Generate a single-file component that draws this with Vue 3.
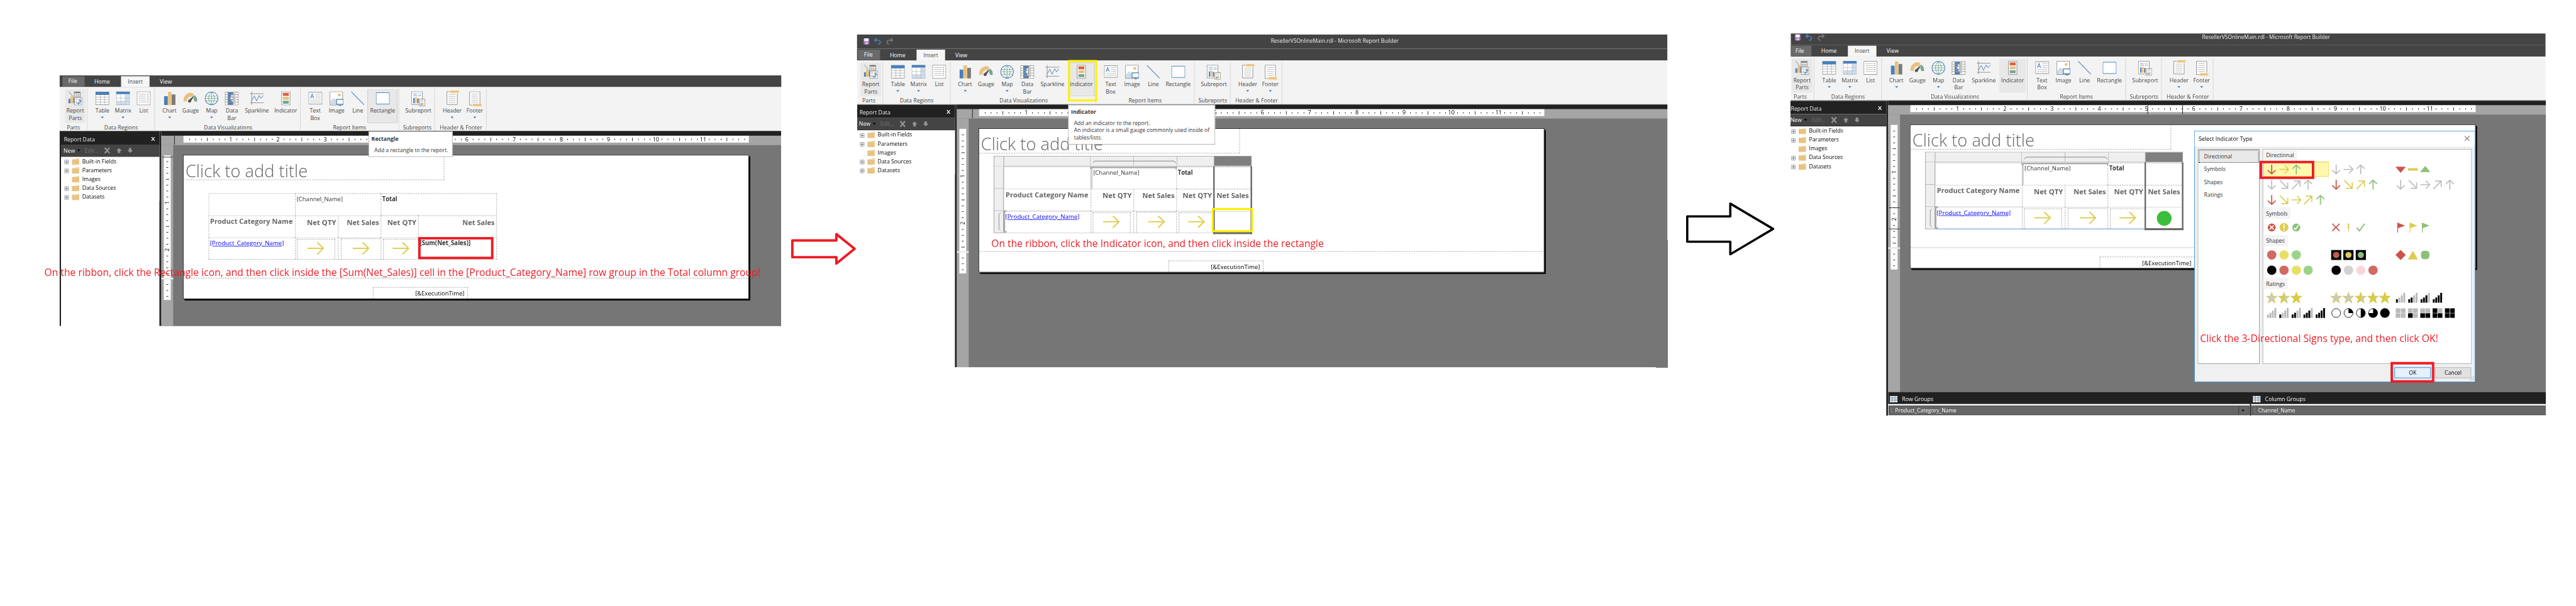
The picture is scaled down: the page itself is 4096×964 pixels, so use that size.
<script setup>
const groups = [
  { name: 'Parts', w: 51.2, pad: 5, shift: -2, items: [{ icon: 'parts', lines: ['Report', 'Parts'], w: 42 }] },
  {
    name: 'Data Regions', w: 137.1, pad: 9, shift: 1,
    items: [
      { icon: 'table', lines: ['Table'], w: 42, more: true },
      { icon: 'matrix', lines: ['Matrix'], w: 42, more: true },
      { icon: 'list', lines: ['List'], w: 42 },
    ],
  },
  {
    name: 'Data Visualizations', w: 295.9, pad: 8, shift: 2,
    items: [
      { icon: 'chart', lines: ['Chart'], w: 42.5, more: true },
      { icon: 'gauge', lines: ['Gauge'], w: 43 },
      { icon: 'map', lines: ['Map'], w: 43, more: true },
      { icon: 'databar', lines: ['Data', 'Bar'], w: 39 },
      { icon: 'spark', lines: ['Sparkline'], w: 63 },
      { icon: 'indicator', lines: ['Indicator'], w: 54 },
    ],
  },
  {
    name: 'Report Items', w: 199.7, pad: 9, shift: 1,
    items: [
      { icon: 'textbox', lines: ['Text', 'Box'], w: 41 },
      { icon: 'image', lines: ['Image'], w: 46 },
      { icon: 'line', lines: ['Line'], w: 40 },
      { icon: 'rect', lines: ['Rectangle'], w: 61 },
    ],
  },
  { name: 'Subreports', w: 73.3, pad: 6, shift: 2, items: [{ icon: 'subreport', lines: ['Subreport'], w: 67 }] },
  {
    name: 'Header & Footer', w: 104.8, pad: 12, shift: 2,
    items: [
      { icon: 'header', lines: ['Header'], w: 46, more: true },
      { icon: 'footer', lines: ['Footer'], w: 46, more: true },
    ],
  },
]

const tree = [
  { name: 'Built-in Fields', open: true },
  { name: 'Parameters', open: true },
  { name: 'Images', open: false },
  { name: 'Data Sources', open: true },
  { name: 'Datasets', open: true },
]

const shots = [
  { id: 1, active: 'rect' },
  { id: 2, active: 'indicator' },
  { id: 3, active: '' },
]

const hTicks = Array.from({ length: 95 }, (_, i) => i + 1)
const vTicks = Array.from({ length: 20 }, (_, i) => i + 1)

const gallery = [
  {
    name: 'Directional',
    rows: [
      ['down-r right-y up-g', 'down-s right-s up-s', 'tridown-r dash-y triup-g'],
      ['down-s dr-s ur-s up-s', 'down-r dr-y ur-y up-g', 'down-s dr-s right-s ur-s up-s'],
      ['down-r dr-y right-y ur-y up-g'],
    ],
  },
  { name: 'Symbols', rows: [['cx-r cbang-y ccheck-g', 'x-r bang-y check-g', 'flag-r flag-y flag-g']] },
  {
    name: 'Shapes',
    rows: [
      ['dot-lr dot-ly dot-lg', 'lamp-r lamp-y lamp-g', 'diamond-r tri-y oct-g'],
      ['dot-k dot-lr dot-ly dot-lg', 'dot-k dot-ls dot-p dot-lr'],
    ],
  },
  {
    name: 'Ratings',
    rows: [
      ['star-0 star-2 star-4', 'star-0 star-1 star-2 star-3 star-4', 'bars-1 bars-2 bars-3 bars-4'],
      ['bars-0 bars-1 bars-2 bars-3 bars-4', 'pie-0 pie-1 pie-2 pie-3 pie-4', 'box-0 box-1 box-2 box-3 box-4'],
    ],
  },
].map((s) => ({
  ...s,
  rows: s.rows.map((r) => r.map((c) => c.split(' ').map((i) => {
    const [shape, arg] = i.split('-')
    return { shape, arg }
  }))),
}))

const pies = ['', 'M10.5 10.5V1A9.5 9.5 0 0 1 20 10.5Z', 'M10.5 1A9.5 9.5 0 0 1 10.5 20Z', 'M10.5 10.5V1A9.5 9.5 0 1 1 1 10.5Z', 'M10.5 1a9.5 9.5 0 1 1 0 19a9.5 9.5 0 1 1 0-19Z']
const barTops = [14, 10.5, 6, 1]
const boxes = [[0.5, 11], [11, 11], [0.5, 1], [11, 1]]
const sets = ['bars', 'pie', 'box', 'star']
const star = 'm10.5 0 2.8 7.5H21l-6.2 5 2.400 8.200-6.700-5-6.700 5 2.400-8.200L0 7.500h7.700z'

// Squeezes or stretches a line of text to the given width.
const vFit = {
  mounted(el, { value }) {
    el.style.transform = `scaleX(${value / el.offsetWidth})`
  },
}
</script>

<template>
  <div class="viewport">
    <svg class="defs" aria-hidden="true">
      <symbol id="i-parts" viewBox="0 0 28 28">
        <path d="M1 0 11 13" stroke="#7a7a7a" fill="none" />
        <path d="M12 .5h12v12H12z" fill="#fff" stroke="#7a7a7a" /><path d="M12 .5h12v3H12z" fill="#7a7a7a" />
        <path d="M16 3v9M20 3v9M12 7h12M12 10h12" stroke="#999" fill="none" />
        <path d="M0 15h4v9H0z" fill="#4a7fb9" /><path d="M4.500 10h5v14h-5z" fill="#e8c17e" /><path d="M10 13h2v11h-2z" fill="#7a7a7a" />
        <path d="M12.500 12.500h15v15h-15z" fill="#fff" stroke="#7a7a7a" />
        <path d="M15 15h3v3h-3zM20 15h6v3h-6zM15 20h3v5h-3z" fill="#bbb" />
        <path d="M19 24h5v-6M21.500 21.500 19 24l2.500 2.500M21.500 20.500 24 18l2.500 2.500" stroke="#4a7fb9" fill="none" stroke-width="1.300" />
      </symbol>
      <symbol id="i-table" viewBox="0 0 28 28">
        <path d="M.5 1h27v26H.5z" fill="#fff" /><path d="M10 6v21M18.500 6v21M1 11.500h26M1 16.500h26M1 21.500h26" stroke="#aaa" fill="none" />
        <path d="M.5 1h27v26H.5z" fill="none" stroke="#7a7a7a" /><path d="M0 .5h28V7H0z" fill="#4a7fb9" />
      </symbol>
      <symbol id="i-matrix" viewBox="0 0 28 28">
        <path d="M.5 1h27v26H.5z" fill="#fff" /><path d="M18.500 6H27v21H18.500zM1 20h26v7H1z" fill="#d0dfee" />
        <path d="M9.500 6v21M18.500 6v21M1 13.500h26M1 20h26" stroke="#b5bcc4" fill="none" />
        <path d="M.5 1h27v26H.5z" fill="none" stroke="#9aa6b2" /><path d="M0 0h28v5.500H0z" fill="#4a7fb9" />
      </symbol>
      <symbol id="i-list" viewBox="0 0 28 28">
        <path d="M.5.5h27v27H.5z" fill="#fff" stroke="#7a7a7a" />
        <path d="M4 5.500h15M4 9.500h15M4 13.500h15M4 17.500h15M4 21.500h15" stroke="#aaa" />
        <path d="M21 5.500h3M21 9.500h3M21 13.500h3M21 17.500h3M21 21.500h3" stroke="#666" />
      </symbol>
      <symbol id="i-chart" viewBox="0 0 28 28">
        <path d="M2.500 9.500h7.500V27.500H2.500z" fill="#4a7fb9" /><path d="M10.500 1h7v26.500h-7z" fill="#e8c17e" /><path d="M18 6h7.500v21.500H18z" fill="#7a7a7a" />
      </symbol>
      <symbol id="i-gauge" viewBox="0 0 28 28">
        <path d="M0 20A14 16 0 0 1 21 5L18 11A8 9 0 0 0 7 20Z" fill="#e8c17e" />
        <path d="M23 8a14 14 0 0 1 5 12.500h-6a8 8 0 0 0-2-6z" fill="#76a592" />
        <path d="M23 7 15.500 19.500a3.200 3.200 0 1 1-4-3z" fill="#555" />
      </symbol>
      <symbol id="i-map" viewBox="0 0 28 28">
        <circle cx="14" cy="14" r="13" fill="#fff" /><path d="M1.500 9.500h25M1 14h26M2 19h24M14 1v26M14 1c-8 7-8 19 0 26M14 1c8 7 8 19 0 26" stroke="#76a592" fill="none" stroke-width="1.200" />
        <circle cx="14" cy="14" r="13" fill="none" stroke="#4a7fb9" stroke-width="1.300" />
      </symbol>
      <symbol id="i-databar" viewBox="0 0 28 28">
        <path d="M.5 1.500h27v26H.5z" fill="#fff" /><path d="M6.500 2H16v4H6.500zM6.500 7H13v4H6.500zM6.500 12h5v4h-5zM6.500 17H14v4H6.500zM6.500 22H16v5H6.500z" fill="#4a7fb9" />
        <path d="M.5 6.500h27M.5 11.500h27M.5 16.500h27M.5 21.500h27M6.500 1v26M16.500 1v26" stroke="#777" fill="none" />
        <path d="M18 4h3M18 9h3M18 14h3M18 19h3M18 24h3" stroke="#555" /><path d="M.5 1.500h27v26H.5z" fill="none" stroke="#7a7a7a" />
      </symbol>
      <symbol id="i-spark" viewBox="0 0 28 28">
        <path d="M3.500 0v27M0 4.500h28M0 23h28" stroke="#7a7a7a" fill="none" /><path d="M3 19 9 9l4.500 10L19 8l3.500 6 5-6" stroke="#4a7fb9" fill="none" stroke-width="1.200" />
      </symbol>
      <symbol id="i-indicator" viewBox="0 0 28 28">
        <path d="M5.500.5h17v27h-17z" fill="#fff" stroke="#7a7a7a" /><path d="M8 3h12v6H8z" fill="#dc6141" /><path d="M8 11h12v6H8z" fill="#e8c17e" /><path d="M8 19h12v6H8z" fill="#76a592" />
      </symbol>
      <symbol id="i-textbox" viewBox="0 0 28 28">
        <path d="M.5 1.500h27v24H.5z" fill="#fff" stroke="#7a7a7a" /><path d="M4 14 7.500 5 11 14M5.200 11h4.600" fill="none" stroke="#4a7fb9" stroke-width="1.300" />
        <path d="M14 5.500h11M14 9.500h11M14 13.500h11M3.500 17.500H25M3.500 21.500H25" stroke="#aaa" />
      </symbol>
      <symbol id="i-image" viewBox="0 0 28 30">
        <path d="M.5.5h26v27H.5z" fill="#fff" stroke="#7a7a7a" /><path d="M1.500 26.500V19L9 13l13 13.500z" fill="#cfdcea" /><circle cx="19.500" cy="7" r="3" fill="#e8c17e" />
        <path d="M14 16h14v10H14z" fill="#fff" stroke="#4a7fb9" stroke-width="1.600" /><path d="M18.500 29.500h6L21.500 27z" fill="#4a7fb9" />
      </symbol>
      <symbol id="i-line" viewBox="0 0 28 28"><path d="M1 .5 27 27" stroke="#4a7fb9" stroke-width="1.300" /></symbol>
      <symbol id="i-rect" viewBox="0 0 28 28"><path d="M.5 2.500h27v23H.5z" fill="#fff" stroke="#4a7fb9" stroke-width="1.200" /></symbol>
      <symbol id="i-subreport" viewBox="0 0 28 30">
        <path d="M.5.5h22v26H.5z" fill="#fff" stroke="#7a7a7a" /><path d="M4 5h7M14 8.500h6M4 8.500h8" stroke="#4a7fb9" /><path d="M13 5h7" stroke="#aaa" />
        <path d="M4 13h3v11H4z" fill="#4a7fb9" /><path d="M8 11.500h3V24H8z" fill="#e8c17e" /><path d="M12 14h3v10h-3z" fill="#7a7a7a" />
        <path d="M16.500 15.500h11v14h-11z" fill="#fff" stroke="#7a7a7a" /><path d="M19 18h6M19 20.500h5" stroke="#aaa" /><path d="M19 23.500h2V28h-2z" fill="#4a7fb9" /><path d="M22.500 22.500h2V28h-2z" fill="#e09a4a" />
      </symbol>
      <symbol id="i-header" viewBox="0 0 28 30">
        <path d="M3.500 2.500h21v26h-21z" fill="#fff" stroke="#7a7a7a" /><path d="M7 8.500h14M7 12.500h14M7 16.500h14M7 20.500h14M7 24.500h14" stroke="#aaa" /><path d="M9 0h19v6.500H9z" fill="#f3f3f3" /><path d="M10 0h18v5H10z" fill="#edc67f" />
      </symbol>
      <symbol id="i-footer" viewBox="0 0 28 30">
        <path d="M3.500.5h21v27h-21z" fill="#fff" stroke="#7a7a7a" /><path d="M7 5.500h14M7 9.500h14M7 13.500h14M7 17.500h14M7 21.500h14" stroke="#aaa" /><path d="M9 23.500h19V30H9z" fill="#f3f3f3" /><path d="M10 25h18v5H10z" fill="#edc67f" />
      </symbol>
      <symbol id="i-grid" viewBox="0 0 16 13"><path d="M0 0h16v13H0z" fill="#e8edf2" /><path d="M5.500 0h5v13h-5z" fill="#fff" /><path d="M0 3.500h16M0 6.500h16M0 9.500h16M5.500 0v13M10.500 0v13" stroke="#6d8299" fill="none" /></symbol>

      <symbol id="g-down" viewBox="0 0 21 21"><path d="M10.500.5V19.500M2.500 12 10.500 19.500 18.500 12" fill="none" stroke="currentColor" stroke-width="2.200" /></symbol>
      <symbol id="g-up" viewBox="0 0 21 21"><path d="M10.500 20.500V1.500M2.500 9 10.500 1.500 18.500 9" fill="none" stroke="currentColor" stroke-width="2.200" /></symbol>
      <symbol id="g-right" viewBox="0 0 21 21"><path d="M.5 10.500H19.500M12 2.500 19.500 10.500 12 18.500" fill="none" stroke="currentColor" stroke-width="2.200" /></symbol>
      <symbol id="g-dr" viewBox="0 0 21 21"><path d="M2 1.500 18 18M5.500 18H18V6" fill="none" stroke="currentColor" stroke-width="2.200" /></symbol>
      <symbol id="g-ur" viewBox="0 0 21 21"><path d="M2 19.500 18 3M5.500 3H18v12" fill="none" stroke="currentColor" stroke-width="2.200" /></symbol>
      <symbol id="g-tridown" viewBox="0 0 21 21"><path d="M0 5h21L10.500 17.500z" fill="currentColor" /></symbol>
      <symbol id="g-dash" viewBox="0 0 21 21"><path d="M.5 8h20v5H.5z" fill="currentColor" /></symbol>
      <symbol id="g-triup" viewBox="0 0 21 21"><path d="M0 16h21L10.500 3.500z" fill="currentColor" /></symbol>
      <symbol id="g-cx" viewBox="0 0 21 21"><circle cx="10.500" cy="10.500" r="8" fill="currentColor" /><path d="m6.500 6.500 8 8m0-8-8 8" stroke="#fff" stroke-width="2.200" /></symbol>
      <symbol id="g-cbang" viewBox="0 0 21 21"><circle cx="10.500" cy="10.500" r="9" fill="currentColor" /><path d="M10.500 3.500v9.500M10.500 15v2.500" stroke="#fff" stroke-width="2.200" /></symbol>
      <symbol id="g-ccheck" viewBox="0 0 21 21"><circle cx="10.500" cy="10.500" r="8" fill="currentColor" /><path d="m6 11 3 3.500 6-9" fill="none" stroke="#fff" stroke-width="2.200" /></symbol>
      <symbol id="g-x" viewBox="0 0 21 21"><path d="m2.500 3 15 15m0-15-15 15" stroke="currentColor" stroke-width="2.200" /></symbol>
      <symbol id="g-bang" viewBox="0 0 21 21"><path d="M10.500 2.500v11M10.500 15.500v2.500" stroke="currentColor" stroke-width="3" /></symbol>
      <symbol id="g-check" viewBox="0 0 21 21"><path d="m2 10.500 5.500 7L18.500 3" fill="none" stroke="currentColor" stroke-width="2.400" /></symbol>
      <symbol id="g-flag" viewBox="0 0 21 21"><path d="M4.500 1v20" stroke="currentColor" stroke-width="1.500" /><path d="M4.500 1 19.500 7 4.500 12.500z" fill="currentColor" /></symbol>
      <symbol id="g-dot" viewBox="0 0 21 21"><circle cx="10.500" cy="10.500" r="9.500" fill="currentColor" /></symbol>
      <symbol id="g-lamp" viewBox="0 0 21 21"><path d="M0 0h21v21H0z" fill="#000" /><circle cx="10.500" cy="10.500" r="6" fill="currentColor" stroke="#bbb" stroke-width=".6" /></symbol>
      <symbol id="g-diamond" viewBox="0 0 21 21"><path d="M10.500 0 21 10.500 10.500 21 0 10.500z" fill="currentColor" /></symbol>
      <symbol id="g-tri" viewBox="0 0 21 21"><path d="M10.500 2 21 19.500H0z" fill="currentColor" /></symbol>
      <symbol id="g-oct" viewBox="0 0 21 21"><rect x="2" y="2" width="17" height="17" rx="6" fill="currentColor" /></symbol>
    </svg>

    <main class="board">
      <section v-for="s in shots" :key="s.id" class="shot" :class="'shot-' + s.id">
        <div class="frame">
          <header class="titlebar">
            <template v-if="s.id > 1">
              <svg class="quick" viewBox="0 0 62 14">
                <path d="M0 1h12v12H0z" fill="#9a6fc0" /><path d="M2 1h8v6H2zM3.500 9.500h5V13h-5z" fill="#fff" /><path d="M4 10.500h2V13H4z" fill="#9a6fc0" />
                <path d="M23 4.500h5c8 0 8 8 1 8.500M27 .5l-4.500 4L27 8" fill="none" stroke="#4a7fb9" stroke-width="2.200" />
                <path d="M59 4.500h-5c-8 0-8 8-1 8.500M55 .5l4.500 4L55 8" fill="none" stroke="#7d7d7d" stroke-width="1.800" />
              </svg>
              <span class="doc"><span v-fit="260" class="fit">ResellerVSOnlineMain.rdl - Microsoft Report Builder</span></span>
            </template>
          </header>
          <nav class="tabs">
            <span class="tab file">File</span><span class="tab home">Home</span><span class="tab current">Insert</span><span class="tab view">View</span>
          </nav>

          <div class="ribbon">
            <div v-for="g in groups" :key="g.name" class="group" :style="{ width: g.w + 'px' }">
              <div class="tools" :style="{ paddingLeft: g.pad + 'px' }">
                <div
                  v-for="t in g.items" :key="t.icon" class="tool"
                  :class="{ soft: t.icon === 'parts' || (s.id === 3 && t.icon === 'indicator'), active: t.icon === s.active }"
                  :style="{ width: t.w + 'px' }"
                >
                  <svg class="ticon" :class="'ic-' + t.icon"><use :href="'#i-' + t.icon" /></svg>
                  <span v-for="l in t.lines" :key="l" class="tl">{{ l }}</span>
                  <i v-if="t.more" class="more"></i>
                </div>
              </div>
              <div class="gname"><span :style="{ marginLeft: g.shift * 2 - 2 + 'px' }">{{ g.name }}</span></div>
            </div>
          </div>

          <div class="main">
            <aside class="side">
              <div class="shead"><span>Report Data</span><b>X</b></div>
              <div class="sbar">
                <span>New</span><i class="caret"></i><span class="dim">Edit...</span>
                <svg class="sicons" viewBox="0 0 58 14">
                  <path d="m1 1.500 9.500 11M10.500 1.500 1 12.500" stroke="#949494" stroke-width="2.800" />
                  <path d="M30 2l5.500 5.500h-3V12h-5V7.500h-3zM53 12l5-5.500h-3V2h-5v4.500h-3z" fill="#949494" />
                </svg>
              </div>
              <ul class="tree">
                <li v-for="n in tree" :key="n.name">
                  <i class="plus" :class="{ none: !n.open }"></i>
                  <svg class="folder" viewBox="0 0 15 13"><path d="M0 2h8l1.500-2H15v13H0z" fill="#e9c382" /><path d="M9.500 1h4v1h-4.500z" fill="#fff" /></svg>
                  <span>{{ n.name }}</span>
                </li>
              </ul>
            </aside>

            <div class="work">
              <div class="hruler">
                <div class="hscale">
                  <span v-for="i in hTicks" :key="i" class="ht"><b v-if="i % 8 === 0">{{ i / 8 }}</b><i v-else :class="{ half: i % 4 === 0 }"></i></span>
                </div>
                <template v-if="s.id === 3"><i class="mark m3a"></i><i class="mark m3b"></i></template>
                <i v-else class="mark" :class="'m' + s.id"></i>
              </div>
              <div class="desk">
                <div class="vruler">
                  <div class="vscale a">
                    <span v-for="i in vTicks" :key="i" class="vt"><b v-if="i % 8 === 0">{{ i / 8 }}</b><i v-else :class="{ half: i % 4 === 0 }"></i></span>
                  </div>
                  <div class="vgap"></div>
                  <div class="vscale b"><span v-for="i in 3" :key="i" class="vt"><i></i></span></div>
                  <i v-if="s.id === 1" class="vmark v1"></i>
                  <template v-if="s.id === 3"><i class="vmark v3a"></i><i class="vmark v3b"></i></template>
                </div>

                <div class="canvas">
                  <div class="page">
                    <div class="ptitle"><span v-fit="248" class="fit">Click to add title</span></div>
                    <template v-if="s.id > 1">
                      <div class="colheads"><i></i><i></i><i></i><i></i><i></i><i class="sel"></i>
                        <svg class="cbr" viewBox="0 0 170 6"><path d="M.5 6 4 1.500h162L169.500 6" fill="none" stroke="#666" /></svg>
                      </div>
                      <div class="rowheads"><i></i><i></i><i></i>
                        <svg class="rbr" viewBox="0 0 5 38"><path d="M5 .5 1.500 4v30L5 37.500" fill="none" stroke="#777" /></svg>
                      </div>
                    </template>
                    <div class="matrix" :class="{ wide: s.id === 1, editing: s.id > 1 }">
                      <div class="c solid"></div>
                      <div class="c span chan"><span v-fit="94" class="fit">[Channel_Name]</span></div>
                      <div class="c span tot"><span v-fit="31" class="fit">Total</span></div>
                      <div class="c h sl first"><span v-fit="168" class="fit">Product Category Name</span></div>
                      <div class="c h sl r"><span v-fit="59" class="fit">Net QTY</span></div>
                      <div class="c h sl r"><span v-fit="65" class="fit">Net Sales</span></div>
                      <div class="c h r"><span v-fit="59" class="fit">Net QTY</span></div>
                      <div class="c h r"><span v-fit="65" class="fit">Net Sales</span></div>
                      <div class="c sl link"><span v-fit="151" class="fit">[Product_Category_Name]</span></div>
                      <div v-for="k in 3" :key="k" class="c sl ar">
                        <div class="box" :class="'b' + k"><svg class="yarrow" viewBox="0 0 34 26"><path d="M0 13H32M20 1 32.500 13 20 25" fill="none" stroke="#dfcf55" stroke-width="2.600" /></svg></div>
                      </div>
                      <div class="c sl">
                        <span v-if="s.id === 1" v-fit="103" class="fit sum">[Sum(Net_Sales)]</span>
                        <i v-if="s.id === 3" class="green"></i>
                      </div>
                    </div>
                    <template v-if="s.id > 1">
                      <i class="gbar top"></i><i class="gbar left"></i><i class="colsel"></i>
                    </template>
                    <i v-if="s.id === 1" class="hl red sumbox"></i>
                    <i v-if="s.id === 2" class="hl yellow cellbox"></i>
                    <div class="pfoot"></div>
                    <div class="exec"><span v-fit="100" class="fit">[&amp;ExecutionTime]</span></div>
                  </div>
                </div>
              </div>

              <div v-if="s.id === 3" class="dock">
                <div class="dhead">
                  <div class="dh rowg"><svg><use href="#i-grid" /></svg><span>Row Groups</span></div>
                  <div class="dh"><svg><use href="#i-grid" /></svg><span>Column Groups</span></div>
                </div>
                <div class="dbody">
                  <div class="dcell dr"><em></em><span v-fit="125" class="fit">Product_Category_Name</span><b><i class="caret"></i></b></div>
                  <div class="dcell"><em></em><span v-fit="75" class="fit">Channel_Name</span></div>
                </div>
              </div>
            </div>
          </div>

          <div v-if="s.id === 1" class="tip tip1"><b>Rectangle</b><p><span v-fit="150" class="fit">Add a rectangle to the report.</span></p></div>
          <template v-if="s.id === 2">
            <div class="tip tip2"><b>Indicator</b>
              <p><span v-fit="154" class="fit">Add an indicator to the report.</span></p>
              <p><span v-fit="275" class="fit">An indicator is a small gauge commonly used inside of</span></p>
              <p><span v-fit="57" class="fit">tables/lists.</span></p>
            </div>
            <i class="hl yellow toolbox"></i>
          </template>

          <div v-if="s.id === 3" class="dialog">
            <div class="dtitle"><span v-fit="109" class="fit">Select Indicator Type</span><svg viewBox="0 0 11 11"><path d="m.5.5 10 10m0-10-10 10" stroke="#000" /></svg></div>
            <div class="dmain">
              <ul class="cats"><li v-for="(g, i) in gallery" :key="g.name" :class="{ chosen: i === 0 }">{{ g.name }}</li></ul>
              <div class="gal">
                <template v-for="(g, gi) in gallery" :key="g.name">
                  <div class="ghead"><span>{{ g.name }}</span></div>
                  <div class="grows">
                    <div v-for="(r, ri) in g.rows" :key="ri" class="grow">
                      <div v-for="(c, ci) in r" :key="ci" class="gcell" :class="{ picked: !gi && !ri && !ci }">
                        <svg v-for="(x, xi) in c" :key="xi" viewBox="0 0 21 21" class="ind" :class="sets.includes(x.shape) ? '' : 'k-' + x.arg">
                          <template v-if="x.shape === 'bars'">
                            <rect v-for="(t, bi) in barTops" :key="bi" :x="1 + bi * 5" :y="t - 0.5" width="3.800" :height="21 - t" :fill="bi < +x.arg ? '#000' : '#bababa'" />
                          </template>
                          <template v-else-if="x.shape === 'pie'">
                            <circle cx="10.500" cy="10.500" r="9" fill="#fff" stroke="#000" stroke-width="1.100" /><path :d="pies[+x.arg]" fill="#000" />
                          </template>
                          <template v-else-if="x.shape === 'box'">
                            <rect v-for="(b, bi) in boxes" :key="bi" :x="b[0]" :y="b[1]" width="9.500" height="9.300" :fill="bi < +x.arg ? '#000' : '#bababa'" />
                          </template>
                          <template v-else-if="x.shape === 'star'">
                            <path :d="star" fill="#c9c9c4" stroke="#d5c95e" stroke-width="1.300" />
                            <svg v-if="+x.arg" x="-1" y="-1" :width="1 + x.arg * 5.500" height="23" class="clip"><path :d="star" transform="translate(1 1)" fill="#dacb42" stroke="#dacb42" stroke-width="1" /></svg>
                          </template>
                          <use v-else :href="'#g-' + x.shape" />
                        </svg>
                      </div>
                    </div>
                  </div>
                </template>
              </div>
            </div>
            <div class="dbtns"><button class="ok">OK</button><button>Cancel</button></div>
            <svg class="grip" viewBox="0 0 9 9"><path d="M6 0h2v2H6zM6 3h2v2H6zM3 3h2v2H3zM6 6h2v2H6zM3 6h2v2H3zM0 6h2v2H0z" fill="#bbb" /></svg>
            <i class="hl red pickbox"></i><i class="hl red okbox"></i>
          </div>
        </div>
      </section>

      <svg class="step s1" viewBox="0 0 134 68"><path d="M2.500 17H92V4L129 34 92 64V51H2.500Z" fill="#fff" stroke="#ed1c24" stroke-width="5" stroke-linejoin="round" /></svg>
      <svg class="step s2" viewBox="0 0 184 112"><path d="M4.500 31H92V5L179 56.500 92 108V82.500H4.500Z" fill="#fff" stroke="#000" stroke-width="4.600" stroke-linejoin="round" /></svg>

      <p class="cap c1"><span v-fit="1455" class="fit">On the ribbon, click the Rectangle icon, and then click inside the [Sum(Net_Sales)] cell in the [Product_Category_Name] row group in the Total column group!</span></p>
      <p class="cap c2"><span v-fit="676" class="fit">On the ribbon, click the Indicator icon, and then click inside the rectangle</span></p>
      <p class="cap c3"><span v-fit="484" class="fit">Click the 3-Directional Signs type, and then click OK!</span></p>
    </main>
  </div>
</template>

<style>
html, body { margin: 0; background: #fff; }
</style>

<style scoped>
.viewport { width: 4096px; height: 964px; overflow: hidden; background: #fff; }
.defs { position: absolute; width: 0; height: 0; }
.board { position: relative; width: 5236px; height: 1232px; transform: scale(0.78228); transform-origin: 0 0; font: 11.2px/16px "Open Sans", "Noto Sans", sans-serif; color: #444; }
.board * { box-sizing: border-box; }
.fit { display: inline-block; white-space: nowrap; transform-origin: 0 50%; }
ul, p { margin: 0; padding: 0; list-style: none; }

.shot { position: absolute; overflow: hidden; }
.shot-1 { left: 121px; top: 153px; width: 1467px; height: 510px; }
.shot-2 { left: 1742px; top: 70px; width: 1647px; height: 677px; }
.shot-3 { left: 3640px; top: 68px; width: 1534px; height: 777px; }
.frame { position: relative; display: flex; flex-direction: column; width: 1700px; }
.shot-1 .frame { margin-top: -29px; height: 539px; }
.shot-2 .frame { margin-left: -4px; height: 677px; }
.shot-3 .frame { margin: -6px 0 0 -9px; height: 783px; }

.titlebar { display: flex; height: 29px; flex: none; background: #444; padding-left: 17px; color: #f1f1f1; line-height: 26px; }
.quick { width: 62px; height: 14px; margin-top: 7px; flex: none; }
.doc { margin-left: 766px; }
.tabs { display: flex; flex: none; height: 24px; background: #444; padding: 2px 0 0 6px; color: #fff; line-height: 22px; }
.tab { text-align: center; }
.file { width: 45px; height: 21px; background: #6a6a6a; line-height: 20px; padding-right: 3px; }
.home { width: 71px; margin-right: 3px; }
.current { width: 58px; background: #f6f6f6; color: #444; }
.view { width: 66px; }

.ribbon { display: flex; flex: none; height: 90px; background: #f3f3f3; padding-left: 6px; border-bottom: 1px solid #444; }
.group { height: 87px; margin-top: 2px; border-right: 1px solid #d0d0d0; flex: none; }
.tools { display: flex; height: 72px; padding-top: 2px; }
.tool { display: flex; flex-direction: column; align-items: center; flex: none; height: 69px; padding-top: 5px; }
.ticon { width: 28px; height: 28px; flex: none; margin-bottom: 3px; }
.ic-header { height: 30px; margin-top: -2px; }
.ic-footer, .ic-image, .ic-subreport { height: 30px; margin-bottom: 1px; }
.tl { line-height: 15px; white-space: nowrap; }
.soft { background: #e8e8e8; }
.active { background: #e8e8e8; box-shadow: inset 0 0 0 1px #c6c6c6; }
.more { width: 0; height: 0; margin-top: 5px; border: 3px solid transparent; border-top: 4px solid #4a7fb9; border-bottom: 0; }
.gname { text-align: center; line-height: 15px; white-space: nowrap; }

.main { display: flex; flex: 1; min-height: 0; }
.side { width: 207px; flex: none; border: solid #212121; border-width: 0 4px 0 3px; background: #fff; color: #000; }
.shead { display: flex; justify-content: space-between; height: 27px; padding: 0 9px 0 6px; background: #212121; color: #f1f1f1; line-height: 32px; }
.shead b { font-size: 12px; line-height: 30px; }
.sbar { display: flex; align-items: center; height: 25px; padding-left: 5px; background: #444; color: #fff; border-bottom: 1px solid #222; }
.sbar .dim { color: #757575; margin-left: 9px; width: 40px; }
.caret { display: inline-block; width: 0; height: 0; margin-left: 5px; border: 3px solid transparent; border-top: 4px solid #000; border-bottom: 0; }
.sicons { width: 58px; height: 14px; }
.tree { background: #fff; }
.tree li { display: flex; align-items: center; height: 18px; padding-left: 7px; }
.plus { width: 9px; height: 9px; margin: 2px 6px 0 0; border: 1px solid #8c8c8c; border-radius: 1px; background: linear-gradient(#35507f, #35507f) 50% 50% / 5px 1px no-repeat, linear-gradient(#35507f, #35507f) 50% 50% / 1px 5px no-repeat, #f4f4f4; }
.plus.none { visibility: hidden; }
.folder { width: 15px; height: 13px; margin-right: 6px; }

.work { position: relative; display: flex; flex-direction: column; flex: 1; min-width: 0; background: #767676; border-top: 9px solid #212121; }
.hruler { position: relative; flex: none; height: 19px; padding-left: 45px; background: #a5a5a5; color: #000; }
.hscale { display: flex; width: 1149px; height: 14px; padding-left: 6px; background: #fff; overflow: hidden; }
.ht { display: flex; width: 12px; flex: none; align-items: center; justify-content: center; }
.ht i { width: 1px; height: 3px; background: #000; }
.ht i.half { height: 7px; }
.ht b { font-weight: 400; font-size: 11.5px; line-height: 14px; }
.mark { position: absolute; top: 0; width: 1px; height: 18px; background: #000; }
.m1 { left: 25.5px; } .m2 { left: 31px; } .m3a { left: 527px; } .m3b { left: 597.5px; }
.desk { display: flex; flex: 1; min-height: 0; }
.vruler { position: relative; width: 24px; flex: none; padding-top: 21px; background: #a5a5a5; color: #000; }
.vscale { width: 14px; margin-left: 5px; background: #fff; }
.vscale.a { height: 249px; padding-top: 6px; }
.vscale.b { height: 42px; padding-top: 4.500px; }
.vt { display: flex; height: 12px; align-items: center; justify-content: center; }
.vt i { width: 4px; height: 1px; background: #000; }
.vt i.half { width: 7px; }
.vt b { font-weight: 400; font-size: 11px; line-height: 12px; transform: rotate(-90deg); }
.vgap { height: 2.500px; background: #f0f0f0; }
.vmark { position: absolute; left: 2px; width: 21px; height: 1px; background: #000; }
.v1 { top: 24px; } .v3a { top: 189px; } .v3b { top: 232px; }
.canvas { flex: 1; padding: 20px 0 0 20px; background: #767676; }

.page { position: relative; width: 1150px; height: 293px; background: #fff; outline: 1px solid #000; outline-offset: -1px; box-shadow: 3px 3px 0 #000; }
.ptitle { position: absolute; left: 1px; top: 1px; width: 530px; height: 50px; border: dashed #9a9a9a; border-width: 0 1px 1px 0; padding-left: 4px; color: #666; font-size: 35px; font-weight: 300; line-height: 62px; }
.matrix { position: absolute; left: 51.500px; top: 77.500px; display: grid; grid-template: 45px 45px 44.500px / 176px 87.700px 87.300px 75.700px 75.300px; color: #333; font-size: 12.4px; line-height: 16px; border: dashed #9a9a9a; border-width: 0 1px 1px 0; }
.matrix.wide { grid-template-columns: 176px 87.700px 87.300px 75.700px 159.300px; }
.c { position: relative; min-width: 0; border: dashed #9a9a9a; border-width: 1px 0 0 1px; padding: 3px 2px 0; white-space: nowrap; }
.c.solid { border-style: solid; border-color: #d0d0d0; }
.c.span { grid-column: span 2; }
.c.sl { border-top: 1px solid #d0d0d0; }
.tot, .sum { font-weight: 700; }
.h { font-weight: 700; font-size: 13px; color: #666; padding-top: 5px; }
.h.first { padding-top: 3px; }
.h.r { display: flex; justify-content: flex-end; padding-right: 4px; }
.h.r .fit { transform-origin: 100% 50%; }
.link { color: #00f; }
.link .fit { text-decoration: underline; }
.c.ar { padding: 0; }
.box { position: absolute; display: flex; align-items: center; justify-content: center; bottom: 0; border: dashed #9a9a9a; border-width: 1px 1px 0 1px; padding-bottom: 3px; }
.b1 { left: 3px; right: 6px; top: 2px; } .b2 { left: 4.500px; right: 0; top: 1px; } .b3 { left: 3.500px; right: 0; top: 2px; }
.b2, .b3 { border-right: 0; }
.yarrow { width: 34px; height: 26px; }
.green { position: absolute; left: 23px; top: 7px; width: 30px; height: 30px; border-radius: 50%; background: #3cbe3c; }
.editing { border-bottom: 1px solid #c8c8c8; }
.shot-3 .editing { border-bottom: 1px solid #3a62c8; }
.editing .first { border-bottom: 1px dashed #777; }
.editing .chan { border-left: 3px double #999; }

.colheads { position: absolute; left: 30.500px; top: 56px; display: grid; grid-template-columns: 20.500px 176px 88px 87.500px 75.500px 75.500px; height: 20.500px; border: 1px solid #8a8a8a; border-width: 1px 0 1.500px 1px; }
.colheads i { background: #efefef; border-right: 1px solid #a9a9a9; }
.colheads i:first-child { border-right-color: #666; }
.colheads i.sel { background: #7f7f7f; }
.cbr { position: absolute; left: 200px; top: 8px; width: 170px; height: 6px; }
.rowheads { position: absolute; left: 30.500px; top: 76.500px; display: grid; grid-template-rows: 46px 45px 45px; width: 20.800px; border: solid #8a8a8a; border-width: 0 1.500px 0 1px; }
.rowheads i { background: #efefef; border-bottom: 1px solid #9a9a9a; }
.rbr { position: absolute; left: 8px; bottom: 4px; width: 5px; height: 38px; }
.gbar { position: absolute; border: 0 solid #a9a9a9; }
.gbar.top { left: 227px; top: 78px; width: 176px; height: 5px; border-width: 3px 3px 0 3px; }
.gbar.left { left: 51px; top: 167px; width: 6px; height: 45px; border-width: 3px 0 3px 3px; }
.colsel { position: absolute; left: 476.500px; top: 77px; width: 79.500px; height: 137.500px; border: solid #686868; border-width: 0 3.500px 4px 3.500px; }
.pfoot { position: absolute; left: 1px; right: 3px; top: 250px; border-top: 1px dashed #9a9a9a; }
.exec { position: absolute; left: 386px; top: 269px; width: 192.500px; height: 23px; border: dashed #9a9a9a; border-width: 1px 1px 0; padding: 4px 6px 0 0; display: flex; justify-content: flex-end; color: #000; font-size: 12.4px; line-height: 16px; }
.exec .fit { transform-origin: 100% 50%; }

.hl { position: absolute; border: 5px solid; }
.red { border-color: #ed1c24; }
.yellow { border-color: #fff200; border-width: 4.500px; }
.sumbox { left: 478px; top: 167px; width: 153px; height: 45px; }
.cellbox { left: 474px; top: 162px; width: 84px; height: 49px; }
.toolbox { left: 433px; top: 52px; width: 59px; height: 84px; }

.tip { position: absolute; top: 143px; background: #fff; border: 1px solid #9e9e9e; color: #333; }
.tip b { display: block; line-height: 16px; color: #333; }
.tip p { padding-left: 6px; line-height: 14.600px; height: 14.600px; }
.tip b + p { margin-top: 7.500px; }
.tip1 { left: 628px; width: 171px; height: 52px; padding: 6px 0 0 5px; }
.tip2 { left: 433px; width: 299px; height: 81px; padding: 6px 0 0 5px; }

.dialog { position: absolute; left: 829px; top: 204px; width: 571px; height: 511px; background: #f0f0f0; border: 1px solid #1883d7; color: #333; }
.dtitle { display: flex; justify-content: space-between; height: 31px; background: #fff; padding: 0 10px 0 8px; color: #000; line-height: 30px; }
.dtitle svg { width: 11px; height: 11px; margin-top: 9px; }
.dmain { display: flex; justify-content: space-between; height: 437px; margin: 5px 6px 0; }
.cats { width: 126px; padding: 1px; background: #fff; border: 1px solid #828790; }
.cats li { height: 26px; padding-left: 11px; line-height: 26px; }
.cats li.chosen { padding-left: 10px; line-height: 24px; background: #e9e9e9; border: 1px dotted #000; }
.gal { width: 425px; background: #fff; border: 1px solid #a0a0a0; }
.ghead { height: 23px; }
.ghead span { display: inline-block; height: 23px; padding: 0 6px; line-height: 23px; background: #f4f4f4; }
.grows { padding-top: 2px; }
.grow { display: flex; height: 31px; padding-left: 1px; }
.gcell { display: flex; align-items: center; gap: 3.800px; width: 131.200px; flex: none; padding-left: 6px; }
.gcell.picked { background: #fff8ae; box-shadow: inset 0 0 0 1px #f2cf3a; height: 30px; margin-right: -1.500px; width: 132.700px; }
.ind { width: 21px; height: 21px; flex: none; overflow: visible; }
.clip { overflow: hidden; }
.k-r { color: #cb5449; } .k-y { color: #dccd50; } .k-g { color: #8cc078; } .k-s { color: #bdbdbd; }
.k-lr { color: #d06a63; } .k-ly { color: #e9df66; } .k-lg { color: #9dd389; } .k-ls { color: #d2d2d0; } .k-p { color: #fbd5da; } .k-k { color: #000; }
.dbtns { display: flex; justify-content: flex-end; gap: 8px; padding: 7px 7px 0 0; }
button { width: 74px; height: 22px; padding: 0; background: #e1e1e1; border: 1px solid #adadad; font: inherit; line-height: 20px; color: #000; }
button.ok { background: #e5f1fb; border: 1px solid #0078d7; }
.grip { position: absolute; right: 1px; bottom: 2px; width: 9px; height: 9px; }
.pickbox { left: 132px; top: 60px; width: 111px; height: 37px; }
.okbox { left: 398px; top: 469px; width: 89px; height: 42px; }

.dock { flex: none; height: 48px; background: #fff; color: #fff; }
.dhead { display: flex; height: 25px; background: #212121; border-bottom: 1px solid #888; }
.dh { display: flex; align-items: center; padding: 4px 0 0 3px; line-height: 16px; }
.dh svg { width: 16px; height: 13px; margin-right: 9px; }
.rowg { width: 738px; }
.dbody { display: flex; gap: 5px; height: 23px; padding: 3px 0 1px 1px; background: linear-gradient(#212121, #212121) 735px 0 / 3px 23px no-repeat #fff; }
.dcell { display: flex; flex: 1; align-items: center; background: #666; border: 1px solid #333; }
.dcell.dr { flex: none; width: 733px; }
.dcell em { width: 3px; height: 9px; margin: 0 5px 0 4px; border: 1px solid #888; border-right: 0; }
.dcell b { margin-left: auto; width: 21px; height: 17px; border-left: 1px solid #333; display: flex; align-items: center; }

.step { position: absolute; overflow: visible; }
.s1 { left: 1608px; top: 472px; width: 134px; height: 68px; }
.s2 { left: 3425px; top: 409px; width: 184px; height: 112px; }
.cap { position: absolute; color: #ed1c24; font-size: 20px; line-height: 28px; white-space: nowrap; }
.c1 { left: 90px; top: 540px; }
.c2 { left: 2015px; top: 482px; }
.c3 { left: 4472px; top: 674px; }
</style>
